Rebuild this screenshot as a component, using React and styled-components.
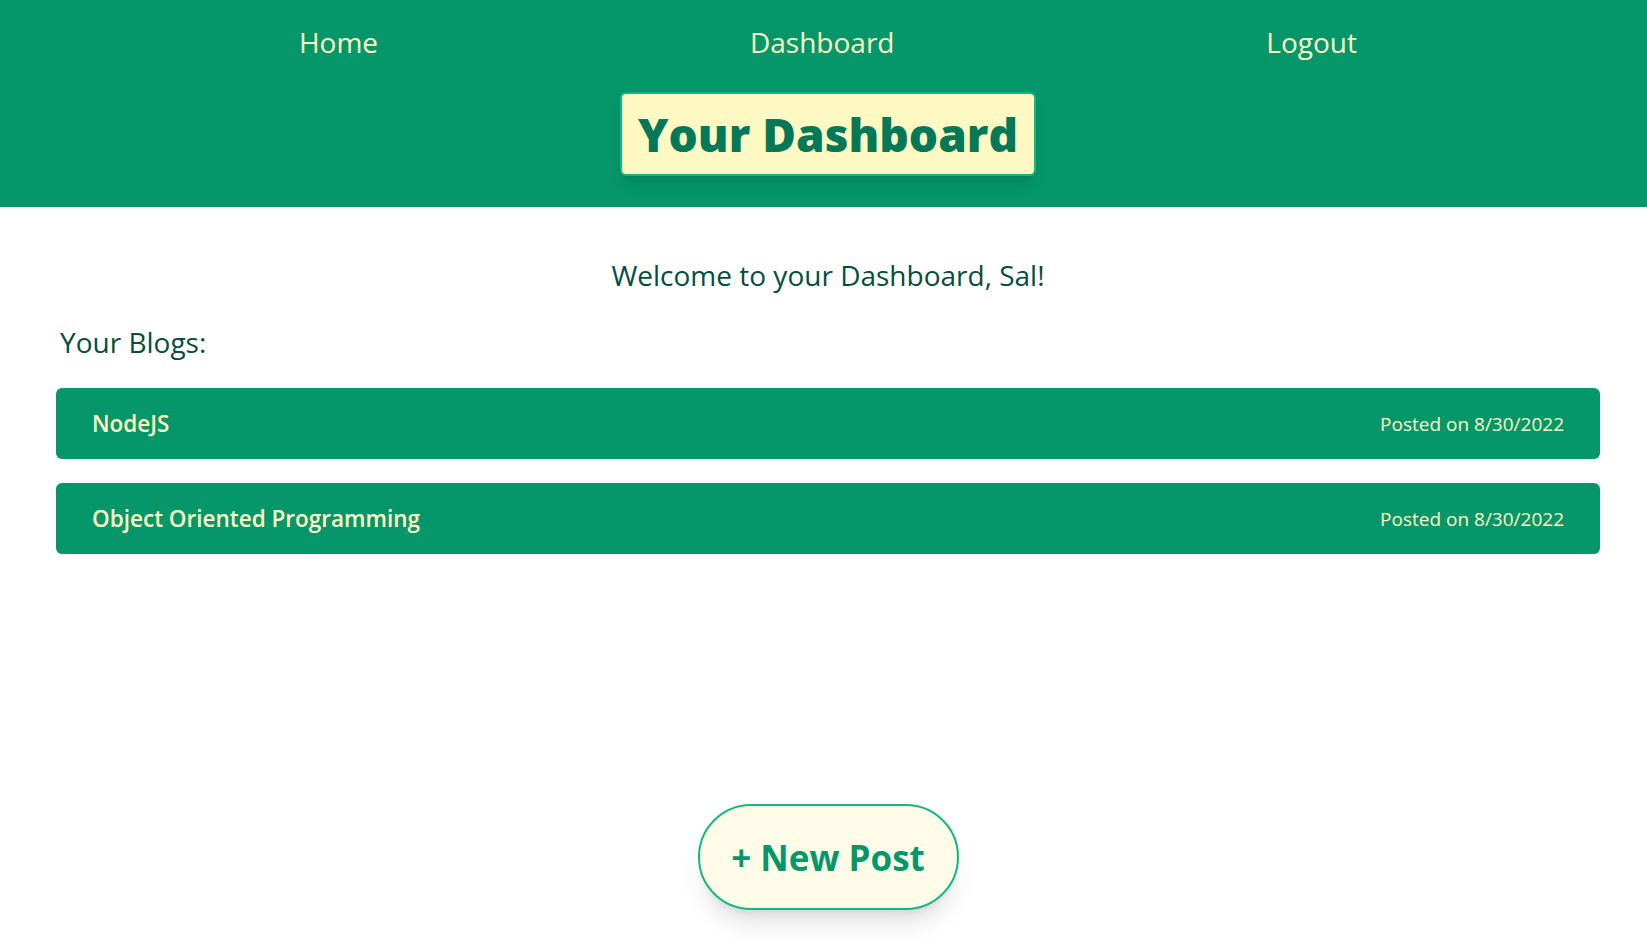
import styled, { createGlobalStyle } from 'styled-components';

const GlobalStyle = createGlobalStyle`
  * { box-sizing: border-box; }
  body {
    margin: 0;
    background: #ffffff;
    font-family: "Open Sans", "Noto Sans", sans-serif;
  }
`;

const Page = styled.div`
  min-height: 100vh;
  display: flex;
  flex-direction: column;
`;

const HeaderBox = styled.header`
  background: #059669;
  height: 207px;
  display: flex;
  flex-direction: column;
  align-items: center;
  padding: 22px 0 0 9px;
`;

const Nav = styled.nav`
  width: 1430px;
  display: flex;
  justify-content: space-around;
`;

const NavLink = styled.a`
  font-size: 28px;
  line-height: 40px;
  color: #fef9c3;
  text-decoration: none;
`;

const TitleBox = styled.h1`
  margin: 30px 0 0;
  padding: 16px;
  background: #fef9c3;
  border: 2px solid #10b981;
  border-radius: 6px;
  box-shadow: 0 10px 15px -3px rgba(0, 0, 0, 0.1), 0 4px 6px -4px rgba(0, 0, 0, 0.1);
  font-size: 46px;
  line-height: 48px;
  font-weight: 800;
  color: #047857;
`;

const Main = styled.main`
  flex: 1;
  display: flex;
  flex-direction: column;
  padding: 0 47px 0 56px;
`;

const Welcome = styled.p`
  margin: 50px 0 0;
  text-align: center;
  font-size: 28px;
  line-height: 36px;
  color: #064e3b;
`;

const BlogsLabel = styled.h2`
  margin: 31px 0 0 4px;
  font-size: 28px;
  line-height: 36px;
  font-weight: 400;
  color: #064e3b;
`;

const BlogList = styled.ul`
  list-style: none;
  margin: 28px 0 0;
  padding: 0;
  display: flex;
  flex-direction: column;
  gap: 24px;
`;

const BlogCard = styled.li`
  height: 71px;
  display: flex;
  align-items: center;
  justify-content: space-between;
  padding: 0 36px;
  background: #059669;
  border-radius: 6px;
  color: #fef9c3;
`;

const BlogTitle = styled.span`
  font-size: 22.5px;
  font-weight: 600;
`;

const BlogDate = styled.span`
  font-size: 19px;
`;

const Footer = styled.div`
  margin-top: auto;
  display: flex;
  justify-content: center;
  padding: 0 0 31px 9px;
`;

const NewPostButton = styled.button`
  width: 261px;
  height: 106px;
  border-radius: 53px;
  border: 2px solid #10b981;
  background: #fefce8;
  color: #059669;
  font-family: "Open Sans", "Noto Sans", sans-serif;
  font-size: 35px;
  font-weight: 700;
  box-shadow: 0 20px 25px -5px rgba(0, 0, 0, 0.1), 0 8px 10px -6px rgba(0, 0, 0, 0.1);
  cursor: pointer;
`;

const blogs = [
  { id: 1, title: 'NodeJS', date: '8/30/2022' },
  { id: 2, title: 'Object Oriented Programming', date: '8/30/2022' },
];

const App = () => (
  <Page>
    <GlobalStyle />
    <HeaderBox>
      <Nav>
        <NavLink href='#'>Home</NavLink>
        <NavLink href='#'>Dashboard</NavLink>
        <NavLink href='#'>Logout</NavLink>
      </Nav>
      <TitleBox>Your Dashboard</TitleBox>
    </HeaderBox>
    <Main>
      <Welcome>Welcome to your Dashboard, Sal!</Welcome>
      <BlogsLabel>Your Blogs:</BlogsLabel>
      <BlogList>
        {blogs.map(({ id, title, date }) => (
          <BlogCard key={id}>
            <BlogTitle>{title}</BlogTitle>
            <BlogDate>Posted on {date}</BlogDate>
          </BlogCard>
        ))}
      </BlogList>
    </Main>
    <Footer>
      <NewPostButton>+ New Post</NewPostButton>
    </Footer>
  </Page>
);

export default App;
